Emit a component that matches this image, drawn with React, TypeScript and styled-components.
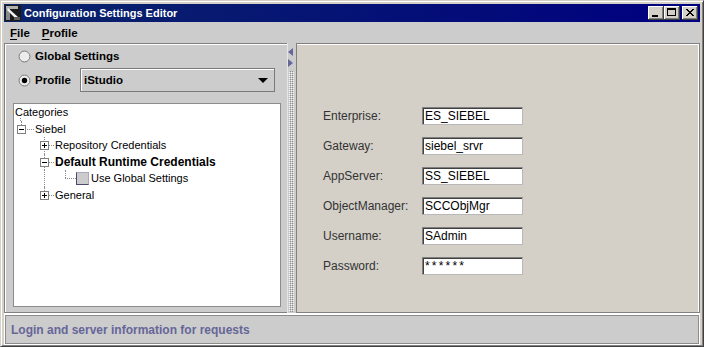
import React from 'react';
import styled, { createGlobalStyle } from 'styled-components';

const Global = createGlobalStyle`
  html, body { margin: 0; padding: 0; background: #d4d0c8; }
  body { font-family: "Liberation Sans", Arial, sans-serif; }
  * { box-sizing: border-box; }
`;

const Window = styled.div`
  width: 704px;
  height: 347px;
  border: 1px solid;
  border-color: #d4d0c8 #404040 #404040 #d4d0c8;
  box-shadow: inset 1px 1px 0 #fff, inset -1px -1px 0 #808080;
  padding: 3px;
  background: #d4d0c8;
  display: flex;
  flex-direction: column;
`;

const TitleBar = styled.div`
  height: 18px;
  flex: 0 0 18px;
  background: linear-gradient(to right, #0a246a, #000080);
  display: flex;
  align-items: center;
  padding: 0 2px 0 1px;
`;

const TitleText = styled.span`
  color: #fff;
  font-weight: 700;
  font-size: 11px;
  margin-left: 3px;
  white-space: nowrap;
`;

const Controls = styled.div`
  margin-left: auto;
  display: flex;
  align-items: center;
`;

const CtlButton = styled.span<{ $gap?: number }>`
  width: 16px;
  height: 14px;
  margin-left: ${p => p.$gap ?? 0}px;
  background: #d4d0c8;
  box-shadow: inset -1px -1px 0 #404040, inset 1px 1px 0 #fff, inset -2px -2px 0 #808080;
  display: flex;
`;

const MenuBar = styled.div`
  height: 21px;
  flex: 0 0 21px;
  background: #cccccc;
  display: flex;
  align-items: center;
`;

const MenuItem = styled.span`
  padding: 0 6px;
  font-size: 11.5px;
  font-weight: 700;
  color: #000;
  & u { text-underline-offset: 2px; }
`;

const Split = styled.div`
  height: 271px;
  flex: 0 0 271px;
  display: flex;
  border-bottom: 1px solid #fff;
`;

const LeftPanel = styled.div`
  width: 283px;
  flex: 0 0 283px;
  background: #cccccc;
  border: 1px solid #808080;
  border-right: none;
  box-shadow: inset 1px 1px 0 #fff;
  padding: 0 6px 5px 8px;
  display: flex;
  flex-direction: column;
`;

const OptionRow = styled.div`
  height: 24px;
  flex: 0 0 24px;
  display: flex;
  align-items: center;
  padding-left: 5px;
  gap: 4px;
`;

const OptionLabel = styled.span`
  font-size: 11.5px;
  font-weight: 700;
  color: #000;
  white-space: nowrap;
`;

const Combo = styled.div`
  margin-left: auto;
  margin-right: 6px;
  width: 195px;
  height: 24px;
  border: 1px solid #7a7a7a;
  box-shadow: inset 1px 1px 0 #fff;
  background: #cccccc;
  display: flex;
  align-items: center;
  padding: 0 6px 0 3px;
  font-size: 11.5px;
  font-weight: 700;
  color: #000;
  & svg { margin-left: auto; }
`;

const TreeBox = styled.div`
  margin-top: 11px;
  height: 204px;
  flex: 0 0 204px;
  background: #fff;
  border: 1px solid #8c8c8c;
  padding-left: 1px;
`;

const TreeRow = styled.div<{ $bold?: boolean; $stem?: boolean }>`
  position: relative;
  display: flex;
  align-items: center;
  height: 16.5px;
  font-size: ${p => (p.$bold ? '12px' : '11px')};
  font-weight: ${p => (p.$bold ? 700 : 400)};
  color: #000;
  white-space: nowrap;
  &::after {
    content: '';
    display: ${p => (p.$stem ? 'block' : 'none')};
    position: absolute;
    left: 5px;
    top: 14px;
    bottom: 0;
    border-left: 1px dotted #8c8c8c;
  }
`;

type VLine = 'none' | 'full' | 'top';

const Guide = styled.span<{ $w: number; $x: number; $v: VLine; $h?: number }>`
  position: relative;
  flex: 0 0 ${p => p.$w}px;
  align-self: stretch;
  &::before {
    content: '';
    display: ${p => (p.$v === 'none' ? 'none' : 'block')};
    position: absolute;
    left: ${p => p.$x}px;
    top: 0;
    bottom: ${p => (p.$v === 'full' ? '0' : '50%')};
    border-left: 1px dotted #8c8c8c;
  }
  &::after {
    content: '';
    display: ${p => (p.$h ? 'block' : 'none')};
    position: absolute;
    left: ${p => p.$x}px;
    top: 50%;
    width: ${p => p.$h ?? 0}px;
    border-top: 1px dotted #8c8c8c;
  }
`;

const HandleSvg = styled.svg<{ $x: number }>`
  position: absolute;
  left: ${p => p.$x - 4}px;
  top: 50%;
  margin-top: -4px;
  z-index: 1;
`;

const TreeCheck = styled.span`
  width: 13px;
  height: 13px;
  flex: 0 0 13px;
  margin-right: 2px;
  background: #cccccc;
  border: 1px solid;
  border-color: #a8a8c0 #a8a8c0 #4a4a70 #4a4a70;
`;

const Divider = styled.div`
  flex: 0 0 9px;
  background: #cccccc;
  border-left: 1px solid #e6e6e6;
  display: flex;
  flex-direction: column;
  padding-top: 5px;
  gap: 3px;
`;

const Grip = styled.div`
  flex: 1;
  width: 5px;
  margin: 1px 0 1px 1px;
  background-image: conic-gradient(#8a8a8a 0 25%, #cccccc 0 50%, #f4f4f4 0 75%, #cccccc 0);
  background-size: 2px 2px;
`;

const RightPanel = styled.div`
  flex: 1;
  background: #d4d0c8;
  border: 1px solid #808080;
  box-shadow: inset 0 1px 0 #fff, inset -1px 0 0 #fff;
  padding: 63px 0 0 26px;
`;

const Form = styled.div`
  display: grid;
  grid-template-columns: 99px 101px;
  grid-auto-rows: 18px;
  row-gap: 12px;
  align-items: center;
`;

const FieldLabel = styled.label`
  font-size: 12px;
  color: #333;
  white-space: nowrap;
`;

const Field = styled.input<{ $masked?: boolean }>`
  width: 101px;
  height: 18px;
  border: 1px solid;
  border-color: #808080 #b8b8b8 #b8b8b8 #808080;
  box-shadow: inset 1px 1px 0 #404040;
  background: #fff;
  padding: 0 1px 0 2px;
  font-family: "Liberation Sans", Arial, sans-serif;
  font-size: 12px;
  letter-spacing: ${p => (p.$masked ? '2.2px' : '0')};
  color: #000;
  outline: none;
`;

const StatusBar = styled.div`
  margin: 1px 1px 0;
  height: 29px;
  flex: 0 0 29px;
  border: 1px solid #8c8c8c;
  box-shadow: 0 0 0 1px #fff;
  background: #cccccc;
  display: flex;
  align-items: center;
  padding-left: 5px;
  font-size: 12px;
  font-weight: 700;
  color: #666699;
`;

const AppIcon = () => (
  <svg width="16" height="16" viewBox="0 0 16 16">
    <rect x="0" y="0" width="16" height="16" fill="#1a1a1a" />
    <rect x="1" y="1" width="4" height="14" fill="#8a8a8a" />
    <rect x="1" y="1" width="12" height="3" fill="#b0b0b0" />
    <path d="M3 3 L13 12 L11 14 L2 5 Z" fill="#f2f2f2" />
    <rect x="9" y="12" width="6" height="3" fill="#606060" />
  </svg>
);

const Radio = ({ on }: { on?: boolean }) => (
  <svg width="13" height="13" viewBox="0 0 13 13">
    <circle cx="6.5" cy="6.5" r="6" fill="#ffffff" />
    <circle cx="6.5" cy="6.5" r="5.5" fill="#ececec" stroke="#6a6a6a" strokeWidth="1" />
    {on && <circle cx="6.5" cy="6.5" r="2.7" fill="#000" />}
  </svg>
);

const Handle = ({ x, open }: { x: number; open?: boolean }) => (
  <HandleSvg $x={x} width="9" height="9" viewBox="0 0 9 9">
    <rect x="0.5" y="0.5" width="8" height="8" fill="#fff" stroke="#808080" />
    <line x1="2" y1="4.5" x2="7" y2="4.5" stroke="#000" />
    {!open && <line x1="4.5" y1="2" x2="4.5" y2="7" stroke="#000" />}
  </HandleSvg>
);

const fields: [string, string][] = [
  ['Enterprise:', 'ES_SIEBEL'],
  ['Gateway:', 'siebel_srvr'],
  ['AppServer:', 'SS_SIEBEL'],
  ['ObjectManager:', 'SCCObjMgr'],
  ['Username:', 'SAdmin'],
  ['Password:', '******'],
];

export default function App() {
  return (
    <>
      <Global />
      <Window>
        <TitleBar>
          <AppIcon />
          <TitleText>Configuration Settings Editor</TitleText>
          <Controls>
            <CtlButton>
              <svg width="16" height="14" viewBox="0 0 16 14">
                <rect x="4" y="9" width="6" height="2" fill="#000" />
              </svg>
            </CtlButton>
            <CtlButton>
              <svg width="16" height="14" viewBox="0 0 16 14">
                <rect x="3.5" y="2.5" width="8" height="7" fill="none" stroke="#000" />
                <rect x="3" y="2" width="9" height="2" fill="#000" />
              </svg>
            </CtlButton>
            <CtlButton $gap={2}>
              <svg width="16" height="14" viewBox="0 0 16 14">
                <path d="M4 3 L11 10 M11 3 L4 10 M5 3 L12 10 M12 3 L5 10" stroke="#000" strokeWidth="1" />
              </svg>
            </CtlButton>
          </Controls>
        </TitleBar>
        <MenuBar>
          <MenuItem><u>F</u>ile</MenuItem>
          <MenuItem><u>P</u>rofile</MenuItem>
        </MenuBar>
        <Split>
          <LeftPanel>
            <OptionRow>
              <Radio />
              <OptionLabel>Global Settings</OptionLabel>
            </OptionRow>
            <OptionRow>
              <Radio on />
              <OptionLabel>Profile</OptionLabel>
              <Combo>
                iStudio
                <svg width="10" height="5" viewBox="0 0 10 5">
                  <path d="M0 0 H10 L5 5 Z" fill="#000" />
                </svg>
              </Combo>
            </OptionRow>
            <TreeBox>
              <TreeRow $stem>Categories</TreeRow>
              <TreeRow>
                <Guide $w={20} $x={6} $v="top" $h={13}>
                  <Handle x={6} open />
                </Guide>
                Siebel
              </TreeRow>
              <TreeRow>
                <Guide $w={20} $x={0} $v="none" />
                <Guide $w={20} $x={9} $v="full" $h={10}>
                  <Handle x={9} />
                </Guide>
                Repository Credentials
              </TreeRow>
              <TreeRow $bold>
                <Guide $w={20} $x={0} $v="none" />
                <Guide $w={20} $x={9} $v="full" $h={10}>
                  <Handle x={9} open />
                </Guide>
                Default Runtime Credentials
              </TreeRow>
              <TreeRow>
                <Guide $w={20} $x={0} $v="none" />
                <Guide $w={20} $x={9} $v="full" />
                <Guide $w={21} $x={10} $v="top" $h={11} />
                <TreeCheck />
                Use Global Settings
              </TreeRow>
              <TreeRow>
                <Guide $w={20} $x={0} $v="none" />
                <Guide $w={20} $x={9} $v="top" $h={10}>
                  <Handle x={9} />
                </Guide>
                General
              </TreeRow>
            </TreeBox>
          </LeftPanel>
          <Divider>
            <svg width="5" height="8" viewBox="0 0 5 8">
              <path d="M5 0 V8 L0 4 Z" fill="#666699" />
            </svg>
            <svg width="5" height="8" viewBox="0 0 5 8">
              <path d="M0 0 V8 L5 4 Z" fill="#666699" />
            </svg>
            <Grip />
          </Divider>
          <RightPanel>
            <Form>
              {fields.map(([label, value]) => (
                <React.Fragment key={label}>
                  <FieldLabel>{label}</FieldLabel>
                  <Field type="text" defaultValue={value} readOnly $masked={label === 'Password:'} />
                </React.Fragment>
              ))}
            </Form>
          </RightPanel>
        </Split>
        <StatusBar>Login and server information for requests</StatusBar>
      </Window>
    </>
  );
}
